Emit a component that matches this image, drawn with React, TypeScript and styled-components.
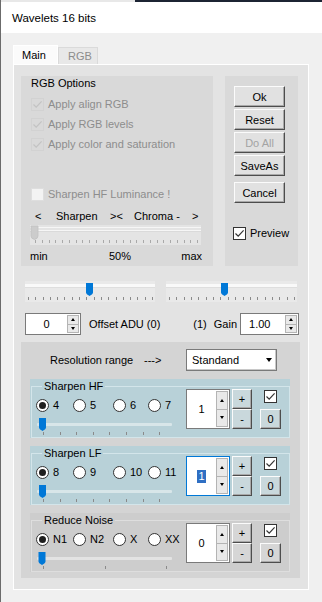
import React from 'react';
import styled, { createGlobalStyle } from 'styled-components';

const GlobalStyle = createGlobalStyle`
  html, body { margin: 0; padding: 0; background: #f0f0f0; }
  *, *::before, *::after { box-sizing: border-box; }
`;

const Window = styled.div`
  width: 322px;
  height: 602px;
  overflow: hidden;
  background: #f0f0f0;
  border-left: 1px solid #6b6b6b;
  font-family: "Liberation Sans", Arial, sans-serif;
  font-size: 11px;
  color: #000;
`;

const TopEdge = styled.div`
  height: 2px;
  background: linear-gradient(to right, #e8e8e8 134px, #1c2433 134px);
`;

const TitleBar = styled.div`
  height: 31px;
  background: #fff;
  display: flex;
  align-items: center;
  padding: 1px 0 0 11px;
  font-size: 11.5px;
`;

const Body = styled.div`
  padding: 12px 0 0 12px;
`;

const TabStrip = styled.div`
  display: flex;
  align-items: flex-end;
  height: 19px;
`;

const Tab = styled.div<{ $active?: boolean }>`
  height: ${p => (p.$active ? 19 : 17)}px;
  width: ${p => (p.$active ? 45 : 40)}px;
  padding-left: ${p => (p.$active ? 8 : 9)}px;
  display: flex;
  align-items: center;
  background: ${p => (p.$active ? '#fbfbfb' : '#e8e8e8')};
  color: ${p => (p.$active ? '#000' : '#8c8c8c')};
  border: 1px solid ${p => (p.$active ? '#fff' : '#dadada')};
  border-bottom: none;
`;

const Page = styled.div`
  width: 296px;
  height: 526px;
  border: 1px solid #fff;
  background: #e3e3e3;
  padding: 11px 0 0 7px;
`;

const TopRow = styled.div`
  display: flex;
  gap: 12px;
  height: 190px;
`;

const Panel = styled.div<{ $w: number }>`
  width: ${p => p.$w}px;
  background: #d9d9d9;
  display: flex;
  flex-direction: column;
`;

const PanelTitle = styled.div`
  padding-left: 10px;
  height: 14px;
  line-height: 14px;
`;

const CheckRow = styled.div<{ $disabled?: boolean; $mt?: number }>`
  display: flex;
  align-items: center;
  gap: 4px;
  height: 20px;
  padding-left: 10px;
  margin-top: ${p => p.$mt ?? 0}px;
  color: ${p => (p.$disabled ? '#8d8d8d' : '#000')};
`;

const Box = styled.span<{ $kind?: 'on' | 'ghost' | 'blank' }>`
  width: 13px;
  height: 13px;
  flex: none;
  display: inline-flex;
  align-items: center;
  justify-content: center;
  border: 1px solid ${p => (p.$kind === 'ghost' ? '#d2d2d2' : p.$kind === 'blank' ? '#dedede' : '#333')};
  background: ${p => (p.$kind === 'ghost' ? 'transparent' : p.$kind === 'blank' ? '#f3f3f3' : '#fff')};
`;

const Tick = ({ color = '#333' }: { color?: string }) => (
  <svg width="11" height="11" viewBox="0 0 11 11">
    <path d="M1.5 5.5 L4.2 8.2 L9.6 2.4" fill="none" stroke={color} strokeWidth="1.2" />
  </svg>
);

const Check = ({ kind }: { kind: 'on' | 'ghost' | 'blank' }) => (
  <Box $kind={kind}>{kind === 'on' ? <Tick /> : kind === 'ghost' ? <Tick color="#c3c3c3" /> : null}</Box>
);

const ScaleLabels = styled.div`
  display: grid;
  grid-template-columns: 21px 54px 24px 58px auto;
  padding-left: 14px;
  margin-top: 5px;
  height: 14px;
  line-height: 14px;
`;

const SliderSlot = styled.div<{ $ml?: number; $mt?: number }>`
  margin-left: ${p => p.$ml ?? 0}px;
  margin-top: ${p => p.$mt ?? 0}px;
  display: flex;
`;

const MinMax = styled.div`
  display: flex;
  padding: 0 0 0 9px;
  margin-top: 4px;
  width: 181px;
  height: 14px;
  line-height: 14px;
`;

const MinLabel = styled.span`
  width: 79px;
`;

const MaxLabel = styled.span`
  margin-left: auto;
`;

const ButtonCol = styled.div`
  display: flex;
  flex-direction: column;
  padding: 10px 0 0 9px;
`;

const PushButton = styled.div<{ $w: number; $h: number; $mt?: number; $off?: boolean; $bg?: string }>`
  width: ${p => p.$w}px;
  height: ${p => p.$h}px;
  margin-top: ${p => p.$mt ?? 0}px;
  display: flex;
  align-items: center;
  justify-content: center;
  background: ${p => p.$bg ?? '#e1e1e1'};
  color: ${p => (p.$off ? '#a3a3a3' : '#000')};
  border: 1px solid;
  border-color: #fbfbfb #4d4d4d #4d4d4d #fbfbfb;
  box-shadow: inset -1px -1px 0 #a9a9a9;
  font-size: 11px;
  flex: none;
`;

const PreviewRow = styled.div`
  display: flex;
  align-items: center;
  gap: 4px;
  height: 18px;
  margin: 21px 0 0 -1px;
`;

const SliderRow = styled.div`
  display: flex;
  gap: 11px;
  height: 21px;
  margin: 15px 0 0 4px;
`;

const OffsetRow = styled.div`
  display: flex;
  align-items: center;
  height: 22px;
  margin: 11px 0 0 4px;
  width: 272px;
`;

const Text = styled.span<{ $ml?: number; $w?: number }>`
  margin-left: ${p => p.$ml ?? 0}px;
  ${p => (p.$w ? `width: ${p.$w}px; flex: none;` : '')}
  white-space: nowrap;
`;

const SpinFrame = styled.div<{ $w: number; $h: number; $focus?: boolean; $ml?: number }>`
  width: ${p => p.$w}px;
  height: ${p => p.$h}px;
  margin-left: ${p => p.$ml ?? 0}px;
  flex: none;
  display: flex;
  background: #fff;
  border: 1px solid ${p => (p.$focus ? '#0078d7' : '#7a7a7a')};
`;

const SpinText = styled.div<{ $left?: boolean }>`
  flex: 1;
  display: flex;
  align-items: center;
  justify-content: ${p => (p.$left ? 'flex-start' : 'center')};
  padding-left: ${p => (p.$left ? 8 : 0)}px;
`;

const Selected = styled.span`
  background: #2f6fc3;
  color: #fff;
  line-height: 13px;
  padding: 0 1px;
`;

const SpinArrows = styled.div`
  width: 13px;
  display: flex;
  flex-direction: column;
  padding: 1px 1px 1px 0;
`;

const SpinArrow = styled.div<{ $down?: boolean }>`
  flex: 1;
  display: flex;
  align-items: center;
  justify-content: center;
  background: #e9e9e9;
  border: 1px solid #b4b4b4;
  ${p => (p.$down ? 'border-top: none;' : '')}
  &::after {
    content: '';
    border-left: 2.5px solid transparent;
    border-right: 2.5px solid transparent;
    ${p => (p.$down ? 'border-top: 3px solid #000;' : 'border-bottom: 3px solid #000;')}
  }
`;

const Spin = ({ w, h, value, focus, left, ml }: { w: number; h: number; value: React.ReactNode; focus?: boolean; left?: boolean; ml?: number }) => (
  <SpinFrame $w={w} $h={h} $focus={focus} $ml={ml}>
    <SpinText $left={left}>{value}</SpinText>
    <SpinArrows>
      <SpinArrow />
      <SpinArrow $down />
    </SpinArrows>
  </SpinFrame>
);

const LowerPanel = styled.div`
  margin-top: 7px;
  width: 279px;
  height: 236px;
  background: #d4d4d4;
  padding: 7px 0 0 9px;
  display: flex;
  flex-direction: column;
  gap: 8px;
`;

const RangeRow = styled.div`
  display: flex;
  align-items: center;
  height: 22px;
  padding-left: 20px;
`;

const Select = styled.div`
  width: 91px;
  height: 22px;
  background: #fff;
  border: 1px solid #7a7a7a;
  box-shadow: inset -1px -1px 0 #c8c8c8;
  display: flex;
  align-items: center;
  justify-content: space-between;
  padding: 0 4px 0 5px;
`;

const Caret = styled.span`
  border-left: 3.5px solid transparent;
  border-right: 3.5px solid transparent;
  border-top: 4px solid #000;
`;

const WaveGroup = styled.div<{ $bg: string }>`
  width: 260px;
  height: 59px;
  background: ${p => p.$bg};
  padding: 7px 0 0 1px;
`;

const Frame = styled.div<{ $line: string }>`
  width: 259px;
  height: 52px;
  border: 1px solid ${p => p.$line};
`;

const Legend = styled.div<{ $bg: string }>`
  width: fit-content;
  margin: -8px 0 -4px 10px;
  padding: 0 2px;
  height: 14px;
  line-height: 14px;
  background: ${p => p.$bg};
`;

const Controls = styled.div`
  display: flex;
  padding-left: 4px;
`;

const LeftCol = styled.div`
  width: 150px;
  display: flex;
  flex-direction: column;
`;

const RadioRow = styled.div`
  display: grid;
  grid-template-columns: 37px 40px 35px auto;
  height: 14px;
  margin-top: 9px;
`;

const Radio = styled.span`
  display: flex;
  align-items: center;
  gap: 4px;
  white-space: nowrap;
`;

const Dot = styled.span<{ $on?: boolean }>`
  width: 13px;
  height: 13px;
  flex: none;
  border-radius: 50%;
  border: 1px solid #333;
  background: #fff;
  display: inline-flex;
  align-items: center;
  justify-content: center;
  &::after {
    content: '';
    width: 7px;
    height: 7px;
    border-radius: 50%;
    background: ${p => (p.$on ? '#1f1f1f' : 'transparent')};
  }
`;

const StepCol = styled.div`
  display: flex;
  flex-direction: column;
  margin-left: 2px;
`;

const ResetCol = styled.div`
  display: flex;
  flex-direction: column;
  align-items: center;
  width: 21px;
  margin-left: 8px;
  padding-top: 1px;
`;

type TrackVariant = 'disabled' | 'band' | 'plain';

const BLUE = '#0078d7';

const TrackBar = ({ w, h, thumb, ticks, variant, trackEnd }: { w: number; h: number; thumb: number; ticks: number[]; variant: TrackVariant; trackEnd?: number }) => {
  const tickTop = variant === 'plain' ? 14 : h - 5;
  return (
    <svg width={w} height={h} viewBox={`0 0 ${w} ${h}`}>
      {variant === 'disabled' && (
        <>
          <rect x="0" y="0" width={w} height={h} fill="#e4e4e4" />
          <rect x="0" y="2" width={w} height="1" fill="#f6f6f6" />
          <rect x="0" y="5" width={w} height="1" fill="#f6f6f6" />
          <rect x="0" y="6" width={w} height="1" fill="#dadada" />
          <path d={`M${thumb - 3.5} 1 h7 v10 q0 2.5 -3.5 3.5 q-3.5 -1 -3.5 -3.5 z`} fill="#cccccc" stroke="#c2c2c2" strokeWidth="0.8" />
        </>
      )}
      {variant === 'band' && (
        <>
          <rect x="0" y="0" width={w} height={h} fill="#e9e9e9" />
          <rect x="0" y="3" width={w} height="3" fill="#f9f9f9" />
          <rect x="0" y="6" width={w} height="1" fill="#dedede" />
        </>
      )}
      {variant === 'plain' && (
        <rect x="1" y="5" width={(trackEnd ?? w) - 1} height="3" rx="1" fill="rgba(255,255,255,0.45)" />
      )}
      {variant !== 'disabled' && (
        <path
          d={`M${thumb - 3.5} ${variant === 'band' ? 2 : 0} h7 v9.5 q0 1.5 -3.5 3.5 q-3.5 -2 -3.5 -3.5 z`}
          fill={BLUE}
        />
      )}
      {ticks.map(t => (
        <rect key={t} x={Math.round(t)} y={tickTop} width="1" height="3" fill={variant === 'disabled' ? '#a9a9a9' : '#8a8a8a'} />
      ))}
    </svg>
  );
};

const spread = (from: number, to: number, n: number) =>
  Array.from({ length: n }, (_, i) => from + ((to - from) * i) / (n - 1));

const WAVE_BLUE = '#b8d1d8';
const WAVE_GRAY = '#cdcdcd';

const Wavelet = ({ title, labels, value, focus, bg, line, ticks, thumb, btnBg }: {
  title: string; labels: string[]; value: React.ReactNode; focus?: boolean; bg: string; line: string; ticks: number[]; thumb: number; btnBg: string;
}) => (
  <WaveGroup $bg={bg}>
    <Frame $line={line}>
      <Legend $bg={bg}>{title}</Legend>
      <Controls>
        <LeftCol>
          <RadioRow>
            {labels.map((l, i) => (
              <Radio key={l}>
                <Dot $on={i === 0} />
                {l}
              </Radio>
            ))}
          </RadioRow>
          <SliderSlot $mt={6}>
            <TrackBar w={140} h={18} thumb={thumb} ticks={ticks} variant="plain" trackEnd={136} />
          </SliderSlot>
        </LeftCol>
        <Spin w={44} h={40} value={value} focus={focus} />
        <StepCol>
          <PushButton $w={20} $h={20} $bg={btnBg}>+</PushButton>
          <PushButton $w={20} $h={20} $bg={btnBg}>-</PushButton>
        </StepCol>
        <ResetCol>
          <Check kind="on" />
          <PushButton $w={21} $h={20} $mt={6} $bg={btnBg}>0</PushButton>
        </ResetCol>
      </Controls>
    </Frame>
  </WaveGroup>
);

export default function App() {
  return (
    <>
      <GlobalStyle />
      <Window>
        <TopEdge />
        <TitleBar>Wavelets 16 bits</TitleBar>
        <Body>
          <TabStrip>
            <Tab $active>Main</Tab>
            <Tab>RGB</Tab>
          </TabStrip>
          <Page>
            <TopRow>
              <Panel $w={192}>
                <PanelTitle>RGB Options</PanelTitle>
                <CheckRow $disabled $mt={4}><Check kind="ghost" />Apply align RGB</CheckRow>
                <CheckRow $disabled><Check kind="ghost" />Apply RGB levels</CheckRow>
                <CheckRow $disabled><Check kind="ghost" />Apply color and saturation</CheckRow>
                <CheckRow $disabled $mt={30}><Check kind="blank" />Sharpen HF Luminance !</CheckRow>
                <ScaleLabels>
                  <span>&lt;</span>
                  <span>Sharpen</span>
                  <span>&gt;&lt;</span>
                  <span>Chroma -</span>
                  <span>&gt;</span>
                </ScaleLabels>
                <SliderSlot $ml={9} $mt={2}>
                  <TrackBar w={171} h={20} thumb={4.5} ticks={spread(5, 167, 25)} variant="disabled" />
                </SliderSlot>
                <MinMax>
                  <MinLabel>min</MinLabel>
                  <span>50%</span>
                  <MaxLabel>max</MaxLabel>
                </MinMax>
              </Panel>
              <Panel $w={73}>
                <ButtonCol>
                  <PushButton $w={51} $h={21}>Ok</PushButton>
                  <PushButton $w={51} $h={21} $mt={2}>Reset</PushButton>
                  <PushButton $w={51} $h={21} $mt={2} $off>Do All</PushButton>
                  <PushButton $w={51} $h={21} $mt={2}>SaveAs</PushButton>
                  <PushButton $w={51} $h={21} $mt={6}>Cancel</PushButton>
                  <PreviewRow><Check kind="on" />Preview</PreviewRow>
                </ButtonCol>
              </Panel>
            </TopRow>

            <SliderRow>
              <TrackBar w={130} h={21} thumb={64.5} ticks={spread(3, 127, 18)} variant="band" />
              <TrackBar w={131} h={21} thumb={58.5} ticks={spread(3, 128, 18)} variant="band" />
            </SliderRow>

            <OffsetRow>
              <Spin w={56} h={22} value="0" />
              <Text $ml={8}>Offset ADU (0)</Text>
              <Text $ml={33}>(1)</Text>
              <Text $ml={7}>Gain</Text>
              <Spin w={59} h={22} value="1.00" left ml={3} />
            </OffsetRow>

            <LowerPanel>
              <RangeRow>
                <Text $w={94}>Resolution range</Text>
                <Text $w={42}>---&gt;</Text>
                <Select>
                  Standand
                  <Caret />
                </Select>
              </RangeRow>
              <Wavelet
                title="Sharpen HF"
                labels={['4', '5', '6', '7']}
                value="1"
                bg={WAVE_BLUE}
                line="#d3e5ea"
                thumb={6.5}
                ticks={[7, 24, 40, 57, 73, 90, 107, 123]}
                btnBg="#c9d8dc"
              />
              <Wavelet
                title="Sharpen LF"
                labels={['8', '9', '10', '11']}
                value={<Selected>1</Selected>}
                focus
                bg={WAVE_BLUE}
                line="#d3e5ea"
                thumb={6.5}
                ticks={[7, 24, 40, 57, 73, 90, 107, 123]}
                btnBg="#c9d8dc"
              />
              <Wavelet
                title="Reduce Noise"
                labels={['N1', 'N2', 'X', 'XX']}
                value="0"
                bg={WAVE_GRAY}
                line="#dedede"
                thumb={6}
                ticks={[7, 69, 130]}
                btnBg="#d6d6d6"
              />
            </LowerPanel>
          </Page>
        </Body>
      </Window>
    </>
  );
}
